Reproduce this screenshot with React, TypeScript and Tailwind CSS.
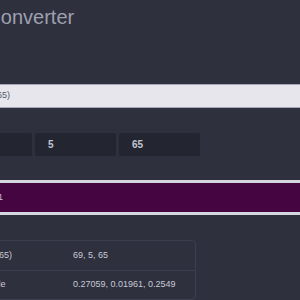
import React from 'react';

const rows = [
    { label: 'rgb(69, 5, 65)', value: '69, 5, 65' },
    { label: '0 to 1 Scale', value: '0.27059, 0.01961, 0.2549' },
];

export default function App() {
    return (
        <div className="w-[300px] h-[300px] overflow-hidden bg-[#2e303e] font-['Liberation_Sans',sans-serif]">
            <div className="ml-[-62px] w-[420px] pt-[3px]">
                <h1 className="ml-[-5px] whitespace-nowrap text-[20px] leading-[28px] text-[#9ea0b0] font-normal">Color Converter</h1>

                <div className="mt-[53px] ml-[13px] h-[24px] border border-[#a6a7b6] bg-[#e6e6ec] pl-[4px] flex items-center text-[9px] text-[#55576a]">
                    rgb(69, 5, 65)
                </div>

                <div className="mt-[25px] ml-[13px] flex gap-[3px]">
                    {['69', '5', '65'].map((v, i) => (
                        <div key={i} className="w-[81px] h-[23px] rounded-[2px] bg-[#232530] pl-[13px] flex items-center text-[10px] font-bold text-[#c3c5d3]">
                            {v}
                        </div>
                    ))}
                </div>

                <div className="mt-[24px] ml-[13px] h-[35px] border-y-[3px] border-[#d6d6de] bg-[#450541] flex items-center pl-[17px] text-[9px] text-[#c9b8d8]">
                    #450541
                </div>

                <div className="mt-[25px] ml-[13px] w-[245px] rounded-[4px] border border-[#3c3e4f] text-[9px] text-[#c8cad6]">
                    {rows.map((r, i) => (
                        <div key={i} className={"flex h-[29px] items-center " + (i > 0 ? 'border-t border-[#3c3e4f]' : '')}>
                            <div className="w-[121px] pl-[6px] whitespace-nowrap overflow-hidden">{r.label}</div>
                            <div className="whitespace-nowrap">{r.value}</div>
                        </div>
                    ))}
                </div>
            </div>
        </div>
    );
}
